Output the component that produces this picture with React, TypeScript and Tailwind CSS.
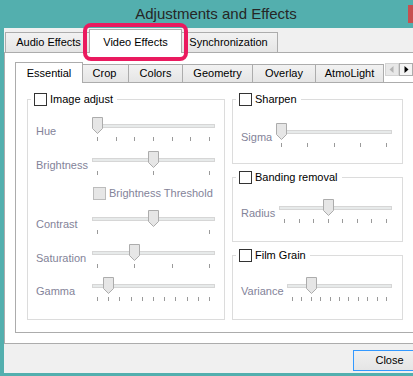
import React from "react";

const GRAY = "text-[#838399]";

function Check({ disabled }: { disabled?: boolean }) {
  return (
    <span
      className={
        disabled
          ? "block w-[13px] h-[13px] shrink-0 border border-[#bcbcbc] bg-[#e6e6e6]"
          : "block w-[13px] h-[13px] shrink-0 border border-[#333333] bg-white"
      }
    />
  );
}

function Slider({ w, n, pos, at }: { w: number; n: number; pos: number; at?: number }) {
  const ticks = Array.from({ length: n }, (_, i) => Math.round(5 + (i * (w - 11)) / (n - 1)));
  const t = at !== undefined ? at : ticks[pos];
  return (
    <svg width={w} height={24} className="block shrink-0 self-start">
      <rect x={0.5} y={7.5} width={w - 1} height={3} fill="#e7eaea" stroke="#d6d6d6" />
      {ticks.map((x, i) => (
        <line key={i} x1={x + 0.5} x2={x + 0.5} y1={20} y2={24} stroke="#9a9a9a" />
      ))}
      <path
        d={`M${t - 4.5} 0.5H${t + 5.5}V11.5L${t + 0.5} 16.5L${t - 4.5} 11.5Z`}
        fill="#e6e6e6"
        stroke="#acacac"
      />
    </svg>
  );
}

function Row({
  label,
  lw,
  mt,
  w,
  n,
  pos,
  at,
}: {
  label: string;
  lw: string;
  mt: string;
  w: number;
  n: number;
  pos: number;
  at?: number;
}) {
  return (
    <div className={`flex items-center h-[28px] ${mt}`}>
      <span className={`${lw} shrink-0 ${GRAY} leading-[13px]`}>{label}</span>
      <Slider w={w} n={n} pos={pos} at={at} />
    </div>
  );
}

function Legend({ children }: { children: React.ReactNode }) {
  return (
    <legend className="ml-[3px] px-[3px]">
      <div className="flex items-center gap-[3px] h-[13px] pr-[1px]">
        <Check />
        <span className="leading-[13px] whitespace-nowrap">{children}</span>
      </div>
    </legend>
  );
}

function Tab({ className, children }: { className: string; children: React.ReactNode }) {
  return (
    <div
      className={`${className} shrink-0 border border-b-0 border-[#acacac] bg-linear-to-b from-[#f2f2f2] to-[#e5e5e5] flex items-center justify-center whitespace-nowrap`}
    >
      {children}
    </div>
  );
}

function SelTab({ className, children }: { className: string; children: React.ReactNode }) {
  return (
    <div
      className={`${className} shrink-0 relative z-10 -mb-px bg-white border border-b-0 border-[#acacac] flex items-center justify-center whitespace-nowrap`}
    >
      {children}
    </div>
  );
}

export default function App() {
  return (
    <div className="relative w-[413px] h-[376px] overflow-hidden bg-[#53afae] font-['Liberation_Sans',Arial,sans-serif] text-[11px] text-black">
      <div className="w-[480px]">
        {/* Title bar */}
        <div className="flex h-[28px]">
          <div className="w-[408px] pl-[24px] text-center text-[15px] leading-[28px] text-[#262626]">
            Adjustments and Effects
          </div>
          <div className="mt-[5px] w-[46px] h-[18px] bg-[#c75050]" />
        </div>

        {/* Client area */}
        <div className="ml-[4px] h-[345px] bg-[#f0f0f0] flex flex-col">
          {/* Outer tabs */}
          <div className="flex items-end h-[24px]">
            <Tab className="ml-[1px] w-[87px] h-[20px]">Audio Effects</Tab>
            <SelTab className="-ml-[3px] w-[93px] h-[24px] pt-[1px]">Video Effects</SelTab>
            <Tab className="-ml-[3px] w-[99px] h-[20px]">Synchronization</Tab>
          </div>

          {/* Outer pane */}
          <div className="h-[292px] w-[460px] border-l border-t border-b border-[#acacac] bg-white pl-[10px] pt-[9px] pb-[10px] flex flex-col">
            {/* Inner tabs */}
            <div className="flex items-end h-[20px]">
              <SelTab className="w-[68px] h-[21px]">Essential</SelTab>
              <Tab className="-ml-[3px] w-[49px] h-[18px]">Crop</Tab>
              <Tab className="-ml-px w-[55px] h-[18px]">Colors</Tab>
              <Tab className="-ml-px w-[71px] h-[18px]">Geometry</Tab>
              <Tab className="-ml-px w-[64px] h-[18px]">Overlay</Tab>
              <Tab className="-ml-px w-[69px] h-[18px]">AtmoLight</Tab>
              <div className="self-start mt-[1px] ml-[1px] flex">
                <div className="w-[14px] h-[13px] bg-[#e8e8e8] border border-[#d4d4d4]">
                  <svg width={12} height={11} className="block">
                    <polygon points="7.5,2 7.5,9 3.5,5.5" fill="#b4b4b4" />
                  </svg>
                </div>
                <div className="w-[14px] h-[13px] bg-[#f4f4f4] border border-[#acacac]">
                  <svg width={12} height={11} className="block">
                    <polygon points="4.5,2 4.5,9 8.5,5.5" fill="#000000" />
                  </svg>
                </div>
              </div>
            </div>

            {/* Inner pane */}
            <div className="h-[251px] w-[400px] border border-[#acacac] pt-[10px] px-[11px] pb-[12px] flex gap-[7px]">
              {/* Left group */}
              <fieldset className="w-[198px] h-[227px] border border-[#dcdcdc]">
                <Legend>Image adjust</Legend>
                <div className="px-[8px] flex flex-col">
                  <Row label="Hue" lw="w-[56px]" mt="mt-[11px]" w={123} n={7} pos={0} />
                  <Row label="Brightness" lw="w-[56px]" mt="mt-[6px]" w={123} n={3} pos={1} />
                  <div className="flex items-center h-[13px] mt-[8px] pl-[57px] gap-[3px]">
                    <Check disabled />
                    <span className={`${GRAY} leading-[13px] whitespace-nowrap`}>Brightness Threshold</span>
                  </div>
                  <Row label="Contrast" lw="w-[56px]" mt="mt-[10px]" w={123} n={2} pos={0} at={61} />
                  <Row label="Saturation" lw="w-[56px]" mt="mt-[6px]" w={123} n={4} pos={1} />
                  <Row label="Gamma" lw="w-[56px]" mt="mt-[5px]" w={123} n={11} pos={1} />
                </div>
              </fieldset>

              {/* Right column */}
              <div className="w-[171px] flex flex-col gap-[7px]">
                <fieldset className="h-[71px] border border-[#dcdcdc]">
                  <Legend>Sharpen</Legend>
                  <div className="px-[8px]">
                    <Row label="Sigma" lw="w-[35px]" mt="mt-[17px]" w={116} n={5} pos={0} />
                  </div>
                </fieldset>
                <fieldset className="h-[71px] border border-[#dcdcdc]">
                  <Legend>Banding removal</Legend>
                  <div className="px-[8px]">
                    <Row label="Radius" lw="w-[38px]" mt="mt-[15px]" w={113} n={8} pos={3} />
                  </div>
                </fieldset>
                <fieldset className="h-[71px] border border-[#dcdcdc]">
                  <Legend>Film Grain</Legend>
                  <div className="px-[8px]">
                    <Row label="Variance" lw="w-[46px]" mt="mt-[15px]" w={105} n={11} pos={2} />
                  </div>
                </fieldset>
              </div>
            </div>
          </div>

          {/* Footer */}
          <div className="flex-1 flex items-start">
            <div className="ml-[349px] mt-[6px] w-[73px] h-[21px] border border-[#3399ff] bg-linear-to-b from-[#f0f0f0] to-[#e5e5e5] flex items-center justify-center">
              Close
            </div>
          </div>
        </div>
      </div>

      {/* Annotation highlight */}
      <div className="absolute left-[83px] top-[23px] w-[105px] h-[38px] border-[4px] border-[#ea1a5f] rounded-[8px] pointer-events-none" />
    </div>
  );
}
